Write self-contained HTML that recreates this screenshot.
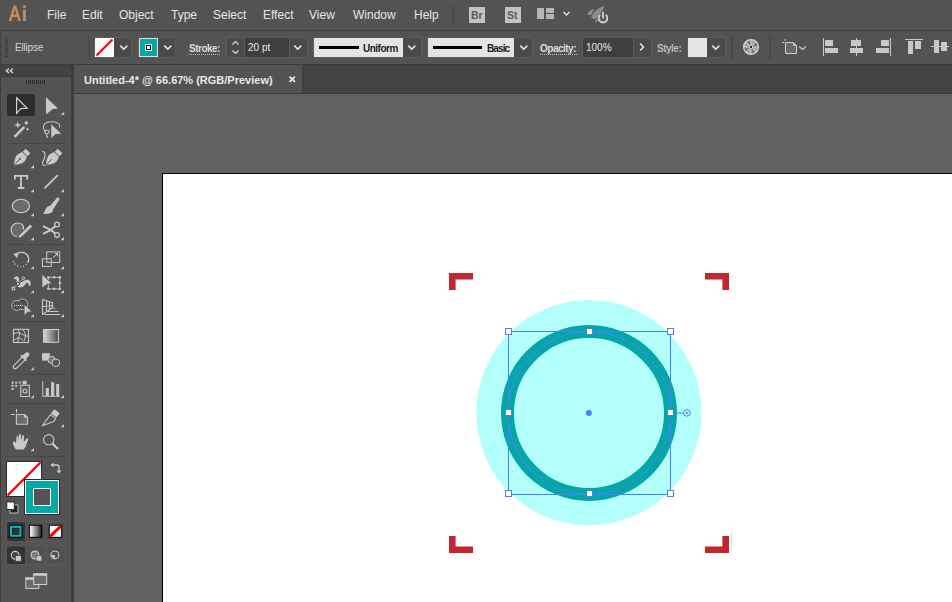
<!DOCTYPE html>
<html><head><meta charset="utf-8">
<style>
*{margin:0;padding:0;box-sizing:border-box}
html,body{width:952px;height:602px;overflow:hidden;background:#535353;font-family:"Liberation Sans",sans-serif}
.a{position:absolute}
.menu{color:#e6e6e6;font-size:12px;top:7px;line-height:16px}
.lbl{font-size:10px;line-height:12px;color:#d6d6d6}
.sep{background:#464646}
svg{position:absolute;overflow:visible}
</style></head><body>
<!-- menubar -->
<div class="a" style="left:0;top:0;width:952px;height:30px;background:#535353"></div>
<svg style="left:0;top:0" width="32" height="26"><path d="M8.8 21 L13.4 5.4 H16.3 L20.9 21 H18.1 L17 17 H12.6 L11.6 21 Z M13.3 14.4 H16.3 L14.8 8.8 Z" fill="#c18a62" fill-rule="evenodd"/><rect x="23" y="9.6" width="2.9" height="11.4" fill="#c18a62"/><circle cx="24.45" cy="6.6" r="1.6" fill="#c18a62"/></svg>
<div class="a menu" style="left:47px">File</div>
<div class="a menu" style="left:82px">Edit</div>
<div class="a menu" style="left:119px">Object</div>
<div class="a menu" style="left:171px">Type</div>
<div class="a menu" style="left:213px">Select</div>
<div class="a menu" style="left:263px">Effect</div>
<div class="a menu" style="left:309px">View</div>
<div class="a menu" style="left:353px">Window</div>
<div class="a menu" style="left:414px">Help</div>
<div class="a" style="left:452px;top:5px;width:2px;height:20px;background:#4a4a4a"></div>

<!-- control bar -->
<div class="a" style="left:0;top:30px;width:952px;height:1px;background:#3e3e3e"></div>
<div class="a" style="left:0;top:31px;width:952px;height:33px;background:#535353"></div>
<div class="a" style="left:0;top:31px;width:1px;height:33px;background:#424242"></div>
<div class="a" style="left:0;top:64px;width:952px;height:1px;background:#3b3b3b"></div>


<!-- control bar contents -->
<div class="a" style="left:5px;top:38px;width:3px;height:19px;background:repeating-linear-gradient(#3a3a3a 0 1px,transparent 1px 2px)"></div>
<div class="a lbl" style="left:15px;top:42px;color:#d2d2d2;letter-spacing:-0.2px">Ellipse</div>
<div class="a" style="left:88px;top:35px;width:2px;height:25px;background:#4a4a4a"></div>
<!-- fill dropdown -->
<div class="a" style="left:94px;top:37px;width:38px;height:21px;background:#4a4a4a;border:1px solid #5c5c5c;border-radius:3px"></div>
<div class="a" style="left:95px;top:38px;width:19px;height:19px;background:#fff"></div>
<svg style="left:95px;top:38px" width="19" height="19"><line x1="1.5" y1="17.5" x2="17.5" y2="1.5" stroke="#f00" stroke-width="2.2"/></svg>
<svg style="left:119px;top:44px" width="11" height="8"><polyline points="1.3,1.6 4.8,5.1 8.3,1.6" fill="none" stroke="#e6e6e6" stroke-width="1.5"/></svg>
<!-- stroke dropdown -->
<div class="a" style="left:138px;top:37px;width:38px;height:21px;background:#4a4a4a;border:1px solid #5c5c5c;border-radius:3px"></div>
<div class="a" style="left:139px;top:38px;width:19px;height:19px;background:#04a9a5;border:1px solid #e6ded6"></div>
<div class="a" style="left:145px;top:44px;width:7px;height:7px;background:#000;border:1px solid #fff"></div>
<div class="a" style="left:147px;top:46px;width:3px;height:3px;background:#fff"></div>
<svg style="left:163px;top:44px" width="11" height="8"><polyline points="1.3,1.6 4.8,5.1 8.3,1.6" fill="none" stroke="#e6e6e6" stroke-width="1.5"/></svg>
<!-- stroke label -->
<div class="a lbl" style="left:189px;top:43px;font-weight:bold;letter-spacing:-0.5px;color:#dcdcdc">Stroke:</div>
<div class="a" style="left:189px;top:54px;width:32px;height:1px;background:repeating-linear-gradient(90deg,#bdbdbd 0 1px,transparent 1px 2px)"></div>
<div class="a" style="left:226px;top:37px;width:82px;height:21px;background:#4a4a4a;border:1px solid #5c5c5c;border-radius:3px"></div>
<div class="a" style="left:244px;top:38px;width:1px;height:19px;background:#5c5c5c"></div><div class="a" style="left:245px;top:38px;width:44px;height:19px;background:#3e3e3e"></div><div class="a" style="left:289px;top:38px;width:1px;height:19px;background:#5c5c5c"></div>
<svg style="left:230px;top:39px" width="12" height="17"><polyline points="2.5,5.5 5.5,2.5 8.5,5.5" fill="none" stroke="#d8d8d8" stroke-width="1.2"/><polyline points="2.5,11.5 5.5,14.5 8.5,11.5" fill="none" stroke="#d8d8d8" stroke-width="1.2"/></svg>
<div class="a lbl" style="left:248px;top:42px;color:#e8e8e8">20 pt</div>
<svg style="left:293px;top:44px" width="11" height="8"><polyline points="1.3,1.6 4.8,5.1 8.3,1.6" fill="none" stroke="#e6e6e6" stroke-width="1.5"/></svg>
<!-- uniform -->
<div class="a" style="left:313px;top:37px;width:109px;height:21px;background:#4a4a4a;border:1px solid #5c5c5c;border-radius:3px"></div>
<div class="a" style="left:314px;top:38px;width:89px;height:19px;background:#e4e4e4"></div>
<div class="a" style="left:319px;top:46px;width:40px;height:3px;background:#000"></div>
<div class="a lbl" style="left:363px;top:43px;font-weight:bold;letter-spacing:-0.5px;color:#1a1a2a">Uniform</div>
<svg style="left:407px;top:44px" width="11" height="8"><polyline points="1.3,1.6 4.8,5.1 8.3,1.6" fill="none" stroke="#e6e6e6" stroke-width="1.5"/></svg>
<!-- basic -->
<div class="a" style="left:427px;top:37px;width:106px;height:21px;background:#4a4a4a;border:1px solid #5c5c5c;border-radius:3px"></div>
<div class="a" style="left:428px;top:38px;width:86px;height:19px;background:#e4e4e4"></div>
<div class="a" style="left:433px;top:46px;width:49px;height:3px;background:#000"></div>
<div class="a lbl" style="left:487px;top:43px;font-weight:bold;letter-spacing:-0.9px;color:#1a1a2a">Basic</div>
<svg style="left:519px;top:44px" width="11" height="8"><polyline points="1.3,1.6 4.8,5.1 8.3,1.6" fill="none" stroke="#e6e6e6" stroke-width="1.5"/></svg>
<!-- opacity -->
<div class="a lbl" style="left:540px;top:43px;font-weight:bold;letter-spacing:-0.5px;color:#dcdcdc">Opacity:</div>
<div class="a" style="left:540px;top:54px;width:37px;height:1px;background:repeating-linear-gradient(90deg,#bdbdbd 0 1px,transparent 1px 2px)"></div>
<div class="a" style="left:582px;top:37px;width:70px;height:21px;background:#4a4a4a;border:1px solid #5c5c5c;border-radius:3px"></div>
<div class="a" style="left:583px;top:38px;width:50px;height:19px;background:#3e3e3e"></div><div class="a" style="left:633px;top:38px;width:1px;height:19px;background:#5c5c5c"></div>
<div class="a lbl" style="left:586px;top:42px;color:#e8e8e8">100%</div>
<svg style="left:638px;top:42px" width="8" height="11"><polyline points="2,1.5 5.5,5 2,8.5" fill="none" stroke="#e6e6e6" stroke-width="1.5"/></svg>
<!-- style -->
<div class="a lbl" style="left:657px;top:43px;font-weight:bold;letter-spacing:-0.5px;color:#b8b8b8">Style:</div>
<div class="a" style="left:687px;top:37px;width:39px;height:21px;background:#4a4a4a;border:1px solid #5c5c5c;border-radius:3px"></div>
<div class="a" style="left:688px;top:38px;width:19px;height:19px;background:#e4e4e4"></div>
<svg style="left:711px;top:44px" width="11" height="8"><polyline points="1.3,1.6 4.8,5.1 8.3,1.6" fill="none" stroke="#e6e6e6" stroke-width="1.5"/></svg>
<div class="a" style="left:731px;top:35px;width:2px;height:25px;background:#4a4a4a"></div>
<!-- recolor -->
<svg style="left:743px;top:38px" width="18" height="18"><path d="M8 9 L8.00 1.70 A7.3 7.3 0 0 1 13.16 3.84Z" fill="#a6a6a6"/><path d="M8 9 L13.16 3.84 A7.3 7.3 0 0 1 15.30 9.00Z" fill="#787878"/><path d="M8 9 L15.30 9.00 A7.3 7.3 0 0 1 13.16 14.16Z" fill="#a6a6a6"/><path d="M8 9 L13.16 14.16 A7.3 7.3 0 0 1 8.00 16.30Z" fill="#787878"/><path d="M8 9 L8.00 16.30 A7.3 7.3 0 0 1 2.84 14.16Z" fill="#a6a6a6"/><path d="M8 9 L2.84 14.16 A7.3 7.3 0 0 1 0.70 9.00Z" fill="#787878"/><path d="M8 9 L0.70 9.00 A7.3 7.3 0 0 1 2.84 3.84Z" fill="#a6a6a6"/><path d="M8 9 L2.84 3.84 A7.3 7.3 0 0 1 8.00 1.70Z" fill="#787878"/><g stroke="#d0d0d0" stroke-width="0.9"><path d="M8.00 6.80L8.00 2.00M9.56 7.44L12.95 4.05M10.20 9.00L15.00 9.00M9.56 10.56L12.95 13.95M8.00 11.20L8.00 16.00M6.44 10.56L3.05 13.95M5.80 9.00L1.00 9.00M6.44 7.44L3.05 4.05"/></g><circle cx="8" cy="9" r="7.4" fill="none" stroke="#d4d4d4" stroke-width="1.3"/><circle cx="8" cy="9" r="2.3" fill="#d4d4d4"/><circle cx="8" cy="9" r="1.2" fill="#222"/></svg>
<div class="a" style="left:769px;top:35px;width:2px;height:25px;background:#4a4a4a"></div>
<!-- artboard icon -->
<svg style="left:780px;top:37px" width="30" height="20"><path d="M5.5 5.5 H13.5 L16.5 8.5 V16.5 H5.5 Z" fill="#6a6a6a" stroke="#d0d0d0" stroke-width="1"/><path d="M13.5 5.5 L16.5 8.5 H13.5Z" fill="#d0d0d0" stroke="#d0d0d0" stroke-width="0.6"/><line x1="5.3" y1="2" x2="5.3" y2="4" stroke="#d0d0d0"/><line x1="2" y1="5.5" x2="4.2" y2="5.5" stroke="#d0d0d0"/><polyline points="19.2,9.5 22.6,12.5 26,9.5" fill="none" stroke="#d0d0d0" stroke-width="1.1"/></svg>
<!-- align icons -->
<svg style="left:820px;top:36px" width="132" height="22">
<g fill="#c8c8c8">
<rect x="3" y="2" width="1" height="18"/><rect x="5" y="4" width="8" height="6"/><rect x="5" y="12" width="13" height="5"/>
<rect x="36" y="2" width="1" height="18"/><rect x="31" y="4" width="10" height="6"/><rect x="30" y="12" width="13" height="5"/>
<rect x="70" y="2" width="1" height="18"/><rect x="61" y="4" width="8" height="6"/><rect x="56" y="12" width="13" height="5"/>
<rect x="85" y="3" width="18" height="1"/><rect x="88" y="5" width="5" height="13"/><rect x="95" y="5" width="6" height="8"/>
<rect x="111" y="10" width="18" height="1"/><rect x="114" y="4" width="5" height="13"/><rect x="121" y="6" width="6" height="9"/>
</g></svg>

<!-- left panel -->
<div class="a" style="left:0;top:65px;width:71px;height:537px;background:#535353"></div>
<div class="a" style="left:0;top:65px;width:71px;height:11px;background:#424242"></div>
<div class="a" style="left:0;top:76px;width:71px;height:1px;background:#3a3a3a"></div>
<div class="a" style="left:0;top:65px;width:1px;height:537px;background:#3e3e3e"></div>
<div class="a" style="left:71px;top:65px;width:3px;height:537px;background:#3c3c3c"></div>

<svg style="left:0;top:0" width="71" height="602" viewBox="0 0 71 602">
<g fill="none" stroke="#c9c9c9" stroke-width="1.2">
<!-- grip -->
<g stroke="#2e2e2e" stroke-width="1"><path d="M26.5 80v4M28.5 80v4M30.5 80v4M32.5 80v4M34.5 80v4M36.5 80v4M38.5 80v4M40.5 80v4M42.5 80v4M44.5 80v4"/></g>
<!-- << -->
<path d="M9 68.6 L6.3 70.8 L9 73 M13 68.6 L10.3 70.8 L13 73" stroke="#dcdcdc" stroke-width="1.3"/>
</g>
<!-- active selection bg -->
<rect x="7" y="94" width="28" height="22" rx="2.5" fill="#2d2d2d"/>
<g fill="#c9c9c9">
<!-- small triangles -->
<path d="M64.2 111.7V115H60.8Z"/>
<path d="M34 164.7V168.3H30.6Z"/>
<path d="M34 189V192.3H30.6Z"/><path d="M64 189V192.3H60.6Z"/>
<path d="M34 213V216.3H30.6Z"/><path d="M64 213V216.3H60.6Z"/>
<path d="M34 237V240.3H30.6Z"/><path d="M64 237V240.3H60.6Z"/>
<path d="M34 266V269.3H30.6Z"/><path d="M64 266V269.3H60.6Z"/>
<path d="M34 290V293.3H30.6Z"/><path d="M64 290V293.3H60.6Z"/>
<path d="M34 314V317.3H30.6Z"/><path d="M64 314V317.3H60.6Z"/>
<path d="M34 367V370.3H30.6Z"/>
<path d="M34 395V398.3H30.6Z"/><path d="M64 395V398.3H60.6Z"/>
<path d="M64 424V427.3H60.6Z"/>
<path d="M34 448V451.3H30.6Z"/>
</g>
<!-- separators -->
<g fill="#474747"><rect x="6" y="143" width="60" height="1"/><rect x="6" y="244" width="60" height="1"/><rect x="6" y="321" width="60" height="1"/><rect x="6" y="374" width="60" height="1"/><rect x="6" y="403" width="60" height="1"/><rect x="6" y="456" width="60" height="1"/></g>
<!-- row1 selection -->
<path d="M16.6 97.8 L27.2 108.2 L20.8 108.6 L16.6 113.4 Z" fill="none" stroke="#d0d0d0" stroke-width="1.2" stroke-linejoin="miter"/>
<path d="M46 97.2 L58.1 108.4 L52.7 108.9 L46 114.4 Z" fill="#c9c9c9"/>
<!-- magic wand -->
<path d="M14.5 136.8 L24.4 126.9" stroke="#c9c9c9" stroke-width="2.6"/>
<path d="M17.8 121.5 L18.7 124.1 L21.3 125 L18.7 125.9 L17.8 128.5 L16.9 125.9 L14.3 125 L16.9 124.1Z" fill="#c9c9c9"/>
<path d="M26.3 120.4 L27.1 122.1 L28.8 122.9 L27.1 123.7 L26.3 125.4 L25.5 123.7 L23.8 122.9 L25.5 122.1Z" fill="#c9c9c9"/>
<path d="M27.5 127.4 L28.1 128.6 L29.3 129.2 L28.1 129.8 L27.5 131 L26.9 129.8 L25.7 129.2 L26.9 128.6Z" fill="#c9c9c9"/>
<!-- lasso -->
<path d="M46 131.5 C42 129 42.5 123 49 122 C56 121 61 123.5 59.5 127.5" fill="none" stroke="#c9c9c9" stroke-width="1.1"/>
<path d="M47 134 C44 134 44 130 47.5 130 C50 130 49.5 133 47 134 C46 135 47 137 48 137.5" fill="none" stroke="#c9c9c9" stroke-width="1.1"/>
<path d="M51.2 124.2 L61.1 133.8 L55.5 134 L51.2 138.2Z" fill="#c9c9c9"/>
<!-- pen -->
<g transform="translate(21 158) rotate(45)"><path d="M-3.6 -5 H3.6 L5 0 C5 4 2 7 0 10.5 C-2 7 -5 4 -5 0 Z" fill="#c9c9c9"/><rect x="-3.2" y="-10" width="6.4" height="4.2" fill="#c9c9c9"/><path d="M0 1.5V10.5" stroke="#535353" stroke-width="0.9"/><circle cx="0" cy="1.5" r="1" fill="#535353"/></g>
<!-- curvature pen -->
<g transform="translate(53 158) rotate(45)"><path d="M-3.6 -5 H3.6 L5 0 C5 4 2 7 0 10.5 C-2 7 -5 4 -5 0 Z" fill="#c9c9c9"/><rect x="-3.2" y="-10" width="6.4" height="4.2" fill="#c9c9c9"/><path d="M0 1.5V10.5" stroke="#535353" stroke-width="0.9"/></g>
<path d="M42.5 151.2 C46 152 45.5 157 43.5 160 C41.5 163 42.5 166 45.5 165.5" fill="none" stroke="#c9c9c9" stroke-width="1.1"/>
<!-- type T -->
<path d="M14.9 179.5V175.9H27.2V179.5 M21 175.9V188 M17.8 188H24.2" fill="none" stroke="#c9c9c9" stroke-width="1.8"/>
<!-- line -->
<path d="M44.4 188.4 L57.8 175.1" stroke="#c9c9c9" stroke-width="1.7"/>
<!-- ellipse -->
<ellipse cx="20.9" cy="206" rx="8.6" ry="6.7" fill="#6b6b6b" stroke="#cfcfcf" stroke-width="1.1"/>
<!-- paintbrush -->
<path d="M57 197.8 C57.8 197 59.2 197.6 59.4 198.6 C59.5 199.2 59.3 199.7 59 200.2 L53.2 209.2 L49.6 206.6 Z" fill="#c9c9c9"/>
<path d="M49.4 206 C51.8 206 53.6 208.3 52.9 210.8 C52 213.6 48 214 43 214 C44.3 212.6 45 210.6 46 208.6 C46.8 207 48 206 49.4 206Z" fill="#c9c9c9"/>
<!-- shaper -->
<path d="M23.3 229.5 C24.5 225 21 222.8 17.5 223 C13 223.2 10.8 227 11.2 230.5 C11.6 233.8 14 236.2 17 236.5" fill="#6b6b6b" stroke="#cfcfcf" stroke-width="1.1"/>
<path d="M30.2 224.3 L32.4 226.5 L21.2 237.3 L18.2 238.4 L19.1 235.2Z" fill="#c9c9c9" stroke="#535353" stroke-width="0.5"/>
<!-- scissors -->
<circle cx="57" cy="224.5" r="2.4" fill="none" stroke="#c9c9c9" stroke-width="1.3"/>
<circle cx="57" cy="235.1" r="2.4" fill="none" stroke="#c9c9c9" stroke-width="1.3"/>
<path d="M43 226.2 L50.5 229.8 L55.2 233.4 M43 233.9 L50.5 230.2 L55.2 226.3" fill="none" stroke="#c9c9c9" stroke-width="2"/>
<!-- rotate -->
<path d="M15.5 254.5 C19 251.5 25 251.6 27.6 255.5 C29.3 258 28.8 261.3 27.8 262" fill="none" stroke="#c9c9c9" stroke-width="1.4"/>
<path d="M13.2 253.8 L18.5 253.2 L17.2 258.3 Z" fill="#c9c9c9"/>
<path d="M13.5 261.5h0.1M15 264h0.1M17.5 266h0.1M20.5 266.8h0.1M23.5 266.3h0.1M26 264.6h0.1M27.8 262.2h0.1" stroke="#c9c9c9" stroke-width="1.3" stroke-linecap="round"/>
<!-- scale -->
<rect x="46.7" y="251.9" width="13" height="10.5" fill="none" stroke="#c9c9c9" stroke-width="1"/>
<rect x="42.5" y="258.8" width="8.8" height="7.6" fill="none" stroke="#c9c9c9" stroke-width="1"/>
<path d="M53.2 257.6 L57.5 253.6 M54.8 253.5H57.6V256.3" fill="none" stroke="#c9c9c9" stroke-width="1"/>
<!-- puppet warp -->
<path d="M14 280 C13.8 277 15.5 275.8 17 276.2 C18.8 276.8 19.4 279 19.2 281 C19.3 282.3 20.3 282.6 21.7 282 C23.5 281 25 280 27 279.8 C29.5 279.6 31 281.5 30.7 284 C30.5 285.5 30.2 286.5 29.2 286.2 C28.6 284.8 28.6 283.2 27.7 282.9 C26.5 282.6 25.5 284.5 24.2 285.8 C22.5 287.5 19.2 288.3 17.6 286.6 C16 285 17 282 16.6 280.3 C16.3 279 15 278.6 14 280Z" fill="#c9c9c9"/>
<path d="M13.3 288.3 L23.5 278.5" stroke="#535353" stroke-width="1.8"/>
<path d="M13.3 288.3 L23.5 278.5" stroke="#c9c9c9" stroke-width="0.8"/>
<rect x="12.2" y="287.3" width="2.5" height="2.5" fill="#535353" stroke="#c9c9c9" stroke-width="1"/>
<circle cx="23.4" cy="278.3" r="1.3" fill="#535353" stroke="#c9c9c9" stroke-width="1"/>
<circle cx="18" cy="283.8" r="1.6" fill="#d8d8d8" stroke="#3a3a3a" stroke-width="1"/>
<!-- free transform -->
<rect x="48.3" y="277.3" width="11.5" height="11.6" fill="none" stroke="#c9c9c9" stroke-width="0.9"/>
<g fill="#c9c9c9"><rect x="47.2" y="276.2" width="2.2" height="2.2"/><rect x="53" y="276.2" width="2.2" height="2.2"/><rect x="58.8" y="276.2" width="2.2" height="2.2"/><rect x="58.8" y="282" width="2.2" height="2.2"/><rect x="47.2" y="287.8" width="2.2" height="2.2"/><rect x="53" y="287.8" width="2.2" height="2.2"/><rect x="58.8" y="287.8" width="2.2" height="2.2"/></g>
<path d="M42 274.3 L52 283.5 L47 284.2 L42 288Z" fill="#c9c9c9" stroke="#535353" stroke-width="0.7"/>
<!-- shape builder -->
<circle cx="22.5" cy="304.3" r="5.3" fill="none" stroke="#c9c9c9" stroke-width="1"/>
<circle cx="16.7" cy="305.4" r="4.9" fill="none" stroke="#c9c9c9" stroke-width="1"/>
<circle cx="22.5" cy="304.3" r="4.8" fill="#4b4b4b"/>
<circle cx="16.7" cy="305.4" r="4.4" fill="#535353"/>
<path d="M20.1 301.6 A4.9 4.9 0 0 1 20.1 309.2" fill="none" stroke="#7a7a7a" stroke-width="0.8"/>
<path d="M14.3 305.5h0.1M16.4 305.5h0.1M18.5 305.5h0.1M20.5 305.5h0.1M22.5 305.5h0.1" stroke="#e6e6e6" stroke-width="1.2" stroke-linecap="round"/>
<path d="M24.2 304.4 L32.1 311.7 L27.6 312 L24.2 315.4Z" fill="#c9c9c9" stroke="#535353" stroke-width="0.6"/>
<!-- perspective grid -->
<path d="M52.5 305.5 L57 309.5 H51Z" fill="#7e7e7e"/>
<path d="M42.5 299.5 V314.5 L52.5 307.5 V302.8 L42.5 299.5 M46.5 300.8 V311.7 M49.5 301.8 V309.6 M42.5 306.8 L52.5 305.2" fill="none" stroke="#c9c9c9" stroke-width="1.05" stroke-linejoin="round"/>
<path d="M48 311.5 H58.5 M44.5 314.5 H60" fill="none" stroke="#c9c9c9" stroke-width="1"/>
<!-- mesh -->
<rect x="13.5" y="329.3" width="15" height="13.2" fill="none" stroke="#c9c9c9" stroke-width="1.1"/>
<path d="M18 329.9 C19.5 331.5 19.8 333.5 19.4 334.8 C19 336.3 18.3 337.2 18.4 338.2 C18.2 339.8 17.8 341 17.7 342.1 M23.2 329.9 C24.5 331.5 25.5 333.5 25.3 335.5 C25.2 337.8 24.7 339.8 24 341.4 M13.8 333.7 C15 333.2 16.5 332.6 18 332.7 C20.5 333 22.5 334.8 24.6 335.5 C25.8 335.9 27 336.1 28.1 336.2 M14.2 340.3 C15.5 339 17 338 18.4 337.9 C20.5 338 22 339.5 23.2 340.7" fill="none" stroke="#c9c9c9" stroke-width="0.95"/>
<!-- gradient -->
<defs><linearGradient id="gr" x1="0" x2="1"><stop offset="0" stop-color="#d8d8d8"/><stop offset="1" stop-color="#4a4a4a"/></linearGradient>
<linearGradient id="gr2" x1="0" x2="1"><stop offset="0" stop-color="#fff"/><stop offset="1" stop-color="#2e2222"/></linearGradient></defs>
<rect x="43.6" y="329.5" width="14.8" height="12.8" fill="url(#gr)" stroke="#cfcfcf" stroke-width="1"/>
<!-- eyedropper -->
<path d="M22.2 357.2 L14.2 365.2 C13 366.4 13.2 367.6 14 368.2 C14.8 368.9 16 368.8 17 367.8 L25 359.8" fill="none" stroke="#c9c9c9" stroke-width="1.2"/>
<path d="M20.3 355.9 L21.6 354.6 L22.6 355.6 L25 353.2 C26.3 351.9 28.1 352.1 28.8 352.8 C29.6 353.6 29.7 355.3 28.4 356.6 L26 359 L27 360 L25.7 361.3 Z" fill="#c9c9c9"/>
<!-- blend -->
<rect x="42.1" y="353.2" width="7.7" height="7.4" fill="#c9c9c9"/>
<circle cx="51.5" cy="359.8" r="3.6" fill="#7a7a7a" stroke="#c9c9c9" stroke-width="1"/>
<circle cx="55.9" cy="362.8" r="3.8" fill="#535353" stroke="#c9c9c9" stroke-width="1"/>
<!-- symbol sprayer -->
<g fill="#c9c9c9"><rect x="11.6" y="381.6" width="2" height="2"/><rect x="15.2" y="381.6" width="2" height="2"/><rect x="18.8" y="381.6" width="2" height="2"/><rect x="11.6" y="384.8" width="2" height="2"/><rect x="15.2" y="384.8" width="2" height="2"/><rect x="11.6" y="388" width="2" height="2"/><rect x="22.5" y="380.9" width="4" height="3.4"/></g>
<rect x="20.8" y="385.2" width="8.6" height="11.3" fill="none" stroke="#c9c9c9" stroke-width="1.1"/>
<circle cx="25" cy="391" r="2" fill="none" stroke="#c9c9c9" stroke-width="1.2"/>
<!-- column graph -->
<path d="M42.8 381 V396.3 H59.9" fill="none" stroke="#c9c9c9" stroke-width="1"/>
<g fill="#c9c9c9"><rect x="45.8" y="388" width="3.1" height="8"/><rect x="51.1" y="382.2" width="3.1" height="13.8"/><rect x="56.2" y="384" width="3" height="12"/></g>
<!-- artboard -->
<path d="M16.5 409 V412.8 M11 414.5 H14.8" stroke="#c9c9c9" stroke-width="1.1"/>
<path d="M16.4 414.5 H24.7 L27.5 417.3 V424.3 H16.4Z" fill="#6b6b6b" stroke="#c9c9c9" stroke-width="1.1"/>
<path d="M24.2 414.6 L27.5 417.8 H24.2Z" fill="#c9c9c9"/>
<!-- slice/knife -->
<path d="M53.6 410.2 C54.3 409.6 55 409.6 55.6 410 L58.8 412.4 C59.5 413 59.5 413.8 59 414.5 L56.4 417.6 L50.8 413.2Z" fill="#c9c9c9"/>
<path d="M50.5 414.6 L55.6 418.4 L53.8 421.4 L42.3 425.8 Z" fill="none" stroke="#c9c9c9" stroke-width="1.1" stroke-linejoin="round"/>
<!-- hand -->
<path d="M16 449.5 C14 447 12.5 444 13 442 C13.5 441 15 441.5 16 443 L16.5 437 C16.5 435.8 18.3 435.8 18.3 437 L18.5 441 L19 435 C19 433.8 21 433.8 21 435 L21.3 441 L22.2 436 C22.4 434.8 24.2 435 24 436.2 L23.8 442 L26.6 438.5 C27.4 437.7 28.7 438.3 28.2 439.4 C27 442.5 26 447 23.5 449.6Z" fill="#c9c9c9"/>
<!-- zoom -->
<circle cx="48.7" cy="439.8" r="5.2" fill="none" stroke="#c9c9c9" stroke-width="1.1"/>
<path d="M52.5 443.6 L58 449" stroke="#c9c9c9" stroke-width="2.2"/>
<!-- fill/stroke proxies -->
<rect x="6" y="461" width="36" height="36" fill="#2a2a2a"/>
<rect x="7" y="462" width="34" height="34" fill="#fff"/>
<path d="M7.5 495.5 L40.5 462.5" stroke="#f00" stroke-width="2.4"/>
<rect x="24" y="479" width="36" height="36" fill="#2a2a2a"/>
<rect x="25" y="480" width="34" height="34" fill="#fff"/>
<rect x="26" y="481" width="32" height="32" fill="#04a9a5"/>
<rect x="33" y="488" width="18" height="18" fill="#fff"/>
<rect x="34" y="489" width="16" height="16" fill="#535353"/>
<!-- swap arrow -->
<path d="M51.5 465 H57 C58.5 465 59 466 59 467.5 V472" fill="none" stroke="#c9c9c9" stroke-width="1.3"/>
<path d="M50.5 465 L53.5 462.5 V467.5Z M59 473.5 L56.5 470.5 H61.5Z" fill="#c9c9c9"/>
<!-- default -->
<rect x="10" y="505" width="8" height="8" fill="#222" stroke="#c9c9c9" stroke-width="0.9"/>
<rect x="6.8" y="502" width="7.5" height="7.5" fill="#fff" stroke="#222" stroke-width="0.9"/>
<!-- color mode group -->
<rect x="6.5" y="521.5" width="58" height="20" rx="2" fill="#505050" stroke="#5a5a5a" stroke-width="1"/>
<path d="M7 522 H25.3 V541 H9 A2 2 0 0 1 7 539Z" fill="#333333"/>
<path d="M25.8 522 V541 M46.3 522 V541" stroke="#5a5a5a" stroke-width="1"/>
<rect x="9" y="524.8" width="13.5" height="13" fill="#000"/>
<rect x="10" y="525.8" width="11.5" height="11" fill="#10b4b2"/>
<rect x="12" y="527.8" width="7.5" height="7" fill="#2a1f1f"/>
<rect x="12.7" y="528.5" width="6.1" height="5.6" fill="#333"/>
<rect x="28.9" y="524.8" width="13.3" height="13" fill="#000"/>
<rect x="29.9" y="525.8" width="11.3" height="11" fill="url(#gr2)"/>
<rect x="48.8" y="524.8" width="13.3" height="13" fill="#000"/>
<rect x="49.8" y="525.8" width="11.3" height="11" fill="#fff"/>
<path d="M49.8 536.8 L61.1 525.8" stroke="#f00" stroke-width="3" clip-path="url(#nc)"/>
<defs><clipPath id="nc"><rect x="49.8" y="525.8" width="11.3" height="11"/></clipPath></defs>
<!-- draw mode group -->
<rect x="6.5" y="546" width="58" height="18.5" rx="2" fill="#505050" stroke="#5a5a5a" stroke-width="1"/>
<path d="M7 546.5 H25.3 V564 H9 A2 2 0 0 1 7 562Z" fill="#333333"/>
<path d="M25.8 546.5 V564 M46.3 546.5 V564" stroke="#5a5a5a" stroke-width="1"/>
<circle cx="15.2" cy="555.2" r="3.9" fill="#454545" stroke="#c9c9c9" stroke-width="1.2"/>
<rect x="15.4" y="555.6" width="5.8" height="5.6" fill="#c9c9c9" stroke="#3c3c3c" stroke-width="0.6"/>
<circle cx="35" cy="555" r="3.9" fill="#7c7c7c" stroke="#c9c9c9" stroke-width="1.2"/>
<rect x="36.2" y="555.8" width="5.6" height="5.2" fill="#c9c9c9" stroke="#505050" stroke-width="0.6"/>
<circle cx="54.9" cy="554.9" r="3.9" fill="none" stroke="#c9c9c9" stroke-width="1.2"/>
<path d="M54.9 554.9 H58 A3.1 3.1 0 0 1 54.9 558 Z" fill="#c9c9c9" transform="rotate(90 54.9 554.9)"/>
<!-- screen mode -->
<rect x="25.8" y="577.8" width="13" height="10.6" fill="#6b6b6b" stroke="#d0d0d0" stroke-width="1"/>
<rect x="25.8" y="577.8" width="13" height="2" fill="#d0d0d0"/>
<rect x="33.7" y="573.7" width="13" height="10.8" fill="#6b6b6b" stroke="#d0d0d0" stroke-width="1"/>
<rect x="33.7" y="573.7" width="13" height="2" fill="#d0d0d0"/>
</svg>

<!-- tab bar -->
<div class="a" style="left:74px;top:65px;width:878px;height:28px;background:#434343"></div>
<div class="a" style="left:74px;top:65px;width:228px;height:28px;background:#535353"></div><div class="a" style="left:302px;top:65px;width:1px;height:28px;background:#3b3b3b"></div>
<div class="a" style="left:84px;top:74px;font-size:11px;font-weight:bold;color:#e8e8e8;line-height:13px">Untitled-4* @ 66.67% (RGB/Preview)</div>
<div class="a" style="left:74px;top:93px;width:878px;height:1px;background:#3c3c3c"></div>

<!-- canvas -->
<div class="a" style="left:74px;top:94px;width:878px;height:508px;background:#616161"></div>
<div class="a" style="left:162px;top:173px;width:790px;height:429px;background:#fff;border-left:1px solid #000;border-top:1px solid #000"></div>


<!-- tab close -->
<svg style="left:288px;top:75px" width="9" height="9"><path d="M1.6 1.6 L6.9 6.9 M6.9 1.6 L1.6 6.9" stroke="#ececec" stroke-width="1.7"/></svg>
<!-- menubar icons -->
<div class="a" style="left:469px;top:7px;width:16px;height:16px;background:#c3c3c3"></div>
<div class="a" style="left:471px;top:9px;font-size:10.5px;font-weight:bold;color:#5a5a5a;line-height:12px">Br</div>
<div class="a" style="left:505px;top:7px;width:16px;height:16px;background:#c3c3c3"></div>
<div class="a" style="left:507px;top:9px;font-size:10.5px;font-weight:bold;color:#5a5a5a;line-height:12px">St</div>
<svg style="left:537px;top:8px" width="36" height="12"><g fill="#b4b4b4"><rect x="0" y="0" width="7" height="11"/><rect x="9" y="0" width="8" height="5"/><rect x="9" y="6" width="8" height="5"/></g><polyline points="26.5,4 29.5,7 32.5,4" fill="none" stroke="#e0e0e0" stroke-width="1.4"/></svg>
<svg style="left:580px;top:2px" width="30" height="25"><path d="M591.2 17.8 C592 13 597 8 604.1 5.9 C603.5 10 600.5 15 595 19.2 Z" transform="translate(-580 -2)" fill="#8c8c8c"/><path d="M586.8 14.5 C588 11.5 591 9.5 594.7 9.1 C593 11 592 13 591.5 15 Z" transform="translate(-580 -2)" fill="#8c8c8c"/><path d="M595 22.8 C595 21 595.8 19.3 597.4 18.2 L598 20.5 Z" transform="translate(-580 -2)" fill="#8c8c8c"/><circle cx="23" cy="16" r="5.2" fill="#535353"/><path d="M20.3 12.8 A4.3 4.3 0 1 0 25.7 12.8" fill="none" stroke="#d0d0d0" stroke-width="1.9"/><path d="M23 9.5 V16.6" stroke="#535353" stroke-width="3.6"/><path d="M23 10 V16.5" stroke="#d0d0d0" stroke-width="1.9"/></svg>
<!-- artwork -->
<svg style="left:0;top:0" width="952" height="602" viewBox="0 0 952 602">
<g fill="#c1272d">
<path d="M449 273 H473 V279.6 H455.6 V290 H449Z"/>
<path d="M729 273 H705 V279.6 H722.4 V290 H729Z"/>
<path d="M449 553 H473 V546.4 H455.6 V536 H449Z"/>
<path d="M729 553 H705 V546.4 H722.4 V536 H729Z"/>
</g>
<path d="M731.3 531 Q732 540 731.3 549.5" fill="none" stroke="#000" stroke-opacity="0.13" stroke-width="1.2"/>
<circle cx="589" cy="412.7" r="112.6" fill="#b3fffc"/>
<circle cx="589" cy="413" r="81.5" fill="none" stroke="#03a8a4" stroke-width="13"/>
<g fill="none" stroke="#4f7dff" stroke-width="1">
<rect x="508.5" y="331.5" width="162" height="163"/>
<circle cx="589.3" cy="413" r="81.4" shape-rendering="crispEdges"/>
<path d="M673.5 413 H683.3"/>
<circle cx="686.9" cy="412.9" r="3.3"/>
</g>
<circle cx="686.9" cy="412.9" r="1.1" fill="#4f7dff"/>
<circle cx="588.8" cy="412.9" r="3" fill="#4f7dff"/>
<g fill="#fff" stroke="#4f7dff" stroke-width="1">
<rect x="505.5" y="409.5" width="6" height="6"/>
<rect x="667.5" y="409.5" width="6" height="6"/>
<rect x="586.5" y="328.5" width="6" height="6"/>
<rect x="586.5" y="490.5" width="6" height="6"/>
<rect x="505.5" y="328.5" width="6" height="6"/>
<rect x="667.5" y="328.5" width="6" height="6"/>
<rect x="505.5" y="490.5" width="6" height="6"/>
<rect x="667.5" y="490.5" width="6" height="6"/>
</g>
</svg>

</body></html>
